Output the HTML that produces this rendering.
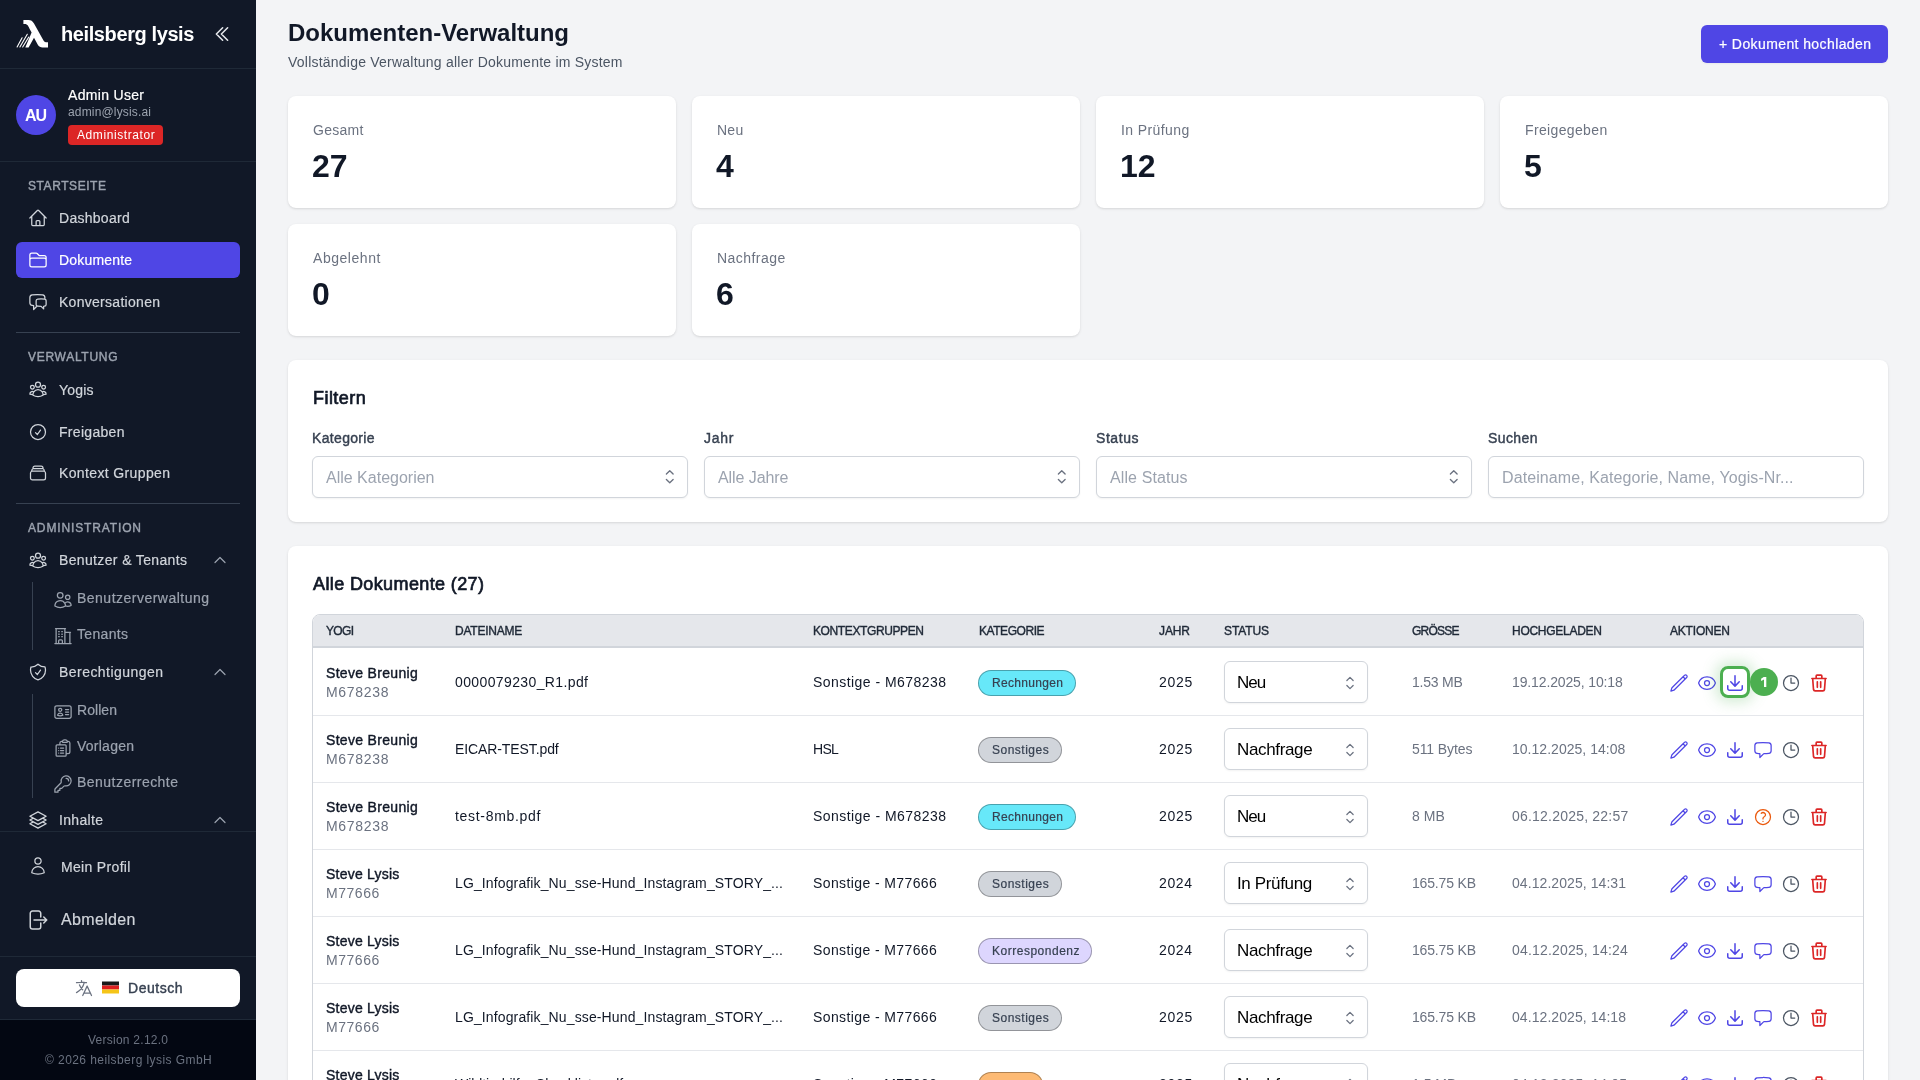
<!DOCTYPE html>
<html lang="de"><head><meta charset="utf-8"><style>*{box-sizing:border-box;margin:0;padding:0}
html,body{width:1920px;height:1080px;overflow:hidden;background:#f3f4f6;font-family:"Liberation Sans",sans-serif;color:#111827}
svg{display:block}
.a{position:absolute}
.t{position:absolute;white-space:pre;line-height:1;will-change:transform}
.ic{position:absolute;fill:none;stroke:currentColor;stroke-linecap:round;stroke-linejoin:round}
.card{position:absolute;background:#fff;border-radius:8px;box-shadow:0 1px 3px 0 rgba(0,0,0,.1),0 1px 2px -1px rgba(0,0,0,.1)}
.sel{position:absolute;background:#fff;border:1px solid #d1d5db;border-radius:6px;box-shadow:0 1px 2px 0 rgba(0,0,0,.05)}
.badge{position:absolute;border-radius:9999px;border:1px solid}
</style></head><body>
<div class="a" style="left:0;top:0;width:256px;height:1080px;background:#111827"></div><div class="a" style="left:0;top:1020px;width:256px;height:60px;background:#030712"></div><svg class="a" style="left:10px;top:10px" width="50" height="50" viewBox="0 0 50 50">
<path fill="#fff" d="M13.4 10 H18.5 C21 10 22.5 11 24 13.5 L33.5 30.5 C34.5 32 35.5 32.3 37 32.3 H38 V37.5 H32.5 C30.5 37.5 29 36.8 27.8 34.8 L24 27.8 L18.6 37.5 H15.3 L21.6 22.6 L19.8 19.2 C18.6 16.6 17.6 14 14.8 14 H13.4 Z"/>
<path stroke="#fff" stroke-width="1.1" fill="none" stroke-linecap="round" d="M7.1 37 L12.1 27.8 M9.9 37 L17.3 24.3 M12.7 37 L18.8 27"/>
</svg><svg class="ic" style="left:212px;top:24px;color:#e5e7eb;" width="20" height="20" viewBox="0 0 24 24" stroke-width="1.9"><path d="m18.75 4.5-7.5 7.5 7.5 7.5m-6-15L5.25 12l7.5 7.5"/></svg><div class="a" style="left:0px;top:68px;width:256px;height:1px;background:#1f2937"></div><div class="a" style="left:16px;top:95px;width:40px;height:40px;border-radius:50%;background:#4f46e5"></div><div class="a" style="left:68px;top:125px;width:95px;height:20px;border-radius:4px;background:#dc2626"></div><div class="a" style="left:0px;top:161px;width:256px;height:1px;background:#1f2937"></div><svg class="ic" style="left:28px;top:208px;color:#d1d5db;" width="20" height="20" viewBox="0 0 24 24" stroke-width="1.5"><path d="m2.25 12 8.954-8.955c.44-.439 1.152-.439 1.591 0L21.75 12M4.5 9.75v10.125c0 .621.504 1.125 1.125 1.125H9.75v-4.875c0-.621.504-1.125 1.125-1.125h2.25c.621 0 1.125.504 1.125 1.125V21h4.125c.621 0 1.125-.504 1.125-1.125V9.75M8.25 21h8.25"/></svg><div class="a" style="left:16px;top:242px;width:224px;height:36px;border-radius:6px;background:#4f46e5"></div><svg class="ic" style="left:28px;top:250px;color:#ffffff;" width="20" height="20" viewBox="0 0 24 24" stroke-width="1.5"><path d="M2.25 12.75V12A2.25 2.25 0 0 1 4.5 9.75h15A2.25 2.25 0 0 1 21.75 12v.75m-8.69-6.44-2.12-2.12a1.5 1.5 0 0 0-1.061-.44H4.5A2.25 2.25 0 0 0 2.25 6v12a2.25 2.25 0 0 0 2.25 2.25h15A2.25 2.25 0 0 0 21.75 18V9a2.25 2.25 0 0 0-2.25-2.25h-5.379a1.5 1.5 0 0 1-1.06-.44Z"/></svg><svg class="ic" style="left:28px;top:292px;color:#d1d5db;" width="20" height="20" viewBox="0 0 24 24" stroke-width="1.5"><path d="M20.25 8.511c.884.284 1.5 1.128 1.5 2.097v4.286c0 1.136-.847 2.1-1.98 2.193-.34.027-.68.052-1.02.072v3.091l-3-3c-1.354 0-2.694-.055-4.02-.163a2.115 2.115 0 0 1-.825-.242m9.345-8.334a2.126 2.126 0 0 0-.476-.095 48.64 48.64 0 0 0-8.048 0c-1.131.094-1.976 1.057-1.976 2.192v4.286c0 .837.46 1.58 1.155 1.951m9.345-8.334V6.637c0-1.621-1.152-3.026-2.76-3.235A48.455 48.455 0 0 0 11.25 3c-2.115 0-4.198.137-6.24.402-1.608.209-2.76 1.614-2.76 3.235v6.226c0 1.621 1.152 3.026 2.76 3.235.577.075 1.157.14 1.74.194V21l4.155-4.155"/></svg><div class="a" style="left:16px;top:332px;width:224px;height:1px;background:#374151"></div><svg class="ic" style="left:28px;top:379px;color:#d1d5db;" width="20" height="20" viewBox="0 0 24 24" stroke-width="1.5"><path d="M18 18.72a9.094 9.094 0 0 0 3.741-.479 3 3 0 0 0-4.682-2.72m.94 3.198.001.031c0 .225-.012.447-.037.666A11.944 11.944 0 0 1 12 21c-2.17 0-4.207-.576-5.963-1.584A6.062 6.062 0 0 1 6 18.719m12 0a5.971 5.971 0 0 0-.941-3.197m0 0A5.995 5.995 0 0 0 12 12.75a5.995 5.995 0 0 0-5.058 2.772m0 0a3 3 0 0 0-4.681 2.72 8.986 8.986 0 0 0 3.74.477m.94-3.197a5.971 5.971 0 0 0-.94 3.197M15 6.75a3 3 0 1 1-6 0 3 3 0 0 1 6 0Zm6 3a2.25 2.25 0 1 1-4.5 0 2.25 2.25 0 0 1 4.5 0Zm-13.5 0a2.25 2.25 0 1 1-4.5 0 2.25 2.25 0 0 1 4.5 0Z"/></svg><svg class="ic" style="left:28px;top:422px;color:#d1d5db;" width="20" height="20" viewBox="0 0 24 24" stroke-width="1.5"><path d="M9 12.75 11.25 15 15 9.75M21 12a9 9 0 1 1-18 0 9 9 0 0 1 18 0Z"/></svg><svg class="ic" style="left:28px;top:463px;color:#d1d5db;" width="20" height="20" viewBox="0 0 24 24" stroke-width="1.5"><path d="M6 6.878V6a2.25 2.25 0 0 1 2.25-2.25h7.5A2.25 2.25 0 0 1 18 6v.878m-12 0c.235-.083.487-.128.75-.128h10.5c.263 0 .515.045.75.128m-12 0A2.25 2.25 0 0 0 4.5 9v.878m13.5-3A2.25 2.25 0 0 1 19.5 9v.878m0 0a2.246 2.246 0 0 0-.75-.128H5.25c-.263 0-.515.045-.75.128m15 0A2.25 2.25 0 0 1 21 12v6a2.25 2.25 0 0 1-2.25 2.25H5.25A2.25 2.25 0 0 1 3 18v-6c0-.98.626-1.813 1.5-2.122"/></svg><div class="a" style="left:16px;top:503px;width:224px;height:1px;background:#374151"></div><svg class="ic" style="left:28px;top:550px;color:#d1d5db;" width="20" height="20" viewBox="0 0 24 24" stroke-width="1.5"><path d="M18 18.72a9.094 9.094 0 0 0 3.741-.479 3 3 0 0 0-4.682-2.72m.94 3.198.001.031c0 .225-.012.447-.037.666A11.944 11.944 0 0 1 12 21c-2.17 0-4.207-.576-5.963-1.584A6.062 6.062 0 0 1 6 18.719m12 0a5.971 5.971 0 0 0-.941-3.197m0 0A5.995 5.995 0 0 0 12 12.75a5.995 5.995 0 0 0-5.058 2.772m0 0a3 3 0 0 0-4.681 2.72 8.986 8.986 0 0 0 3.74.477m.94-3.197a5.971 5.971 0 0 0-.94 3.197M15 6.75a3 3 0 1 1-6 0 3 3 0 0 1 6 0Zm6 3a2.25 2.25 0 1 1-4.5 0 2.25 2.25 0 0 1 4.5 0Zm-13.5 0a2.25 2.25 0 1 1-4.5 0 2.25 2.25 0 0 1 4.5 0Z"/></svg><svg class="ic" style="left:212px;top:552px;color:#9ca3af;" width="16" height="16" viewBox="0 0 24 24" stroke-width="1.8"><path d="m4.5 15.75 7.5-7.5 7.5 7.5"/></svg><div class="a" style="left:32px;top:582px;width:1px;height:68px;background:#374151"></div><svg class="ic" style="left:53px;top:590px;color:#9ca3af;" width="20" height="20" viewBox="0 0 24 24" stroke-width="1.5"><path d="M15 19.128a9.38 9.38 0 0 0 2.625.372 9.337 9.337 0 0 0 4.121-.952 4.125 4.125 0 0 0-7.533-2.493M15 19.128v-.003c0-1.113-.285-2.16-.786-3.07M15 19.128v.106A12.318 12.318 0 0 1 8.624 21c-2.331 0-4.512-.645-6.374-1.766l-.001-.109a6.375 6.375 0 0 1 11.964-3.07M12 6.375a3.375 3.375 0 1 1-6.75 0 3.375 3.375 0 0 1 6.75 0Zm8.25 2.25a2.625 2.625 0 1 1-5.25 0 2.625 2.625 0 0 1 5.25 0Z"/></svg><svg class="ic" style="left:53px;top:626px;color:#9ca3af;" width="20" height="20" viewBox="0 0 24 24" stroke-width="1.5"><path d="M2.25 21h19.5m-18-18v18m10.5-18v18m6-13.5V21M6.75 6.75h.75m-.75 3h.75m-.75 3h.75m3-6h.75m-.75 3h.75m-.75 3h.75M6.75 21v-3.375c0-.621.504-1.125 1.125-1.125h2.25c.621 0 1.125.504 1.125 1.125V21M3 3h12m-.75 4.5H21"/></svg><svg class="ic" style="left:28px;top:662px;color:#d1d5db;" width="20" height="20" viewBox="0 0 24 24" stroke-width="1.5"><path d="M9 12.75 11.25 15 15 9.75m-3-7.036A11.959 11.959 0 0 1 3.598 6 11.99 11.99 0 0 0 3 9.749c0 5.592 3.824 10.29 9 11.623 5.176-1.332 9-6.03 9-11.622 0-1.31-.21-2.571-.598-3.751h-.152c-3.196 0-6.1-1.248-8.25-3.285Z"/></svg><svg class="ic" style="left:212px;top:664px;color:#9ca3af;" width="16" height="16" viewBox="0 0 24 24" stroke-width="1.8"><path d="m4.5 15.75 7.5-7.5 7.5 7.5"/></svg><div class="a" style="left:32px;top:694px;width:1px;height:104px;background:#374151"></div><svg class="ic" style="left:53px;top:702px;color:#9ca3af;" width="20" height="20" viewBox="0 0 24 24" stroke-width="1.5"><path d="M15 9h3.75M15 12h3.75M15 15h3.75M4.5 19.5h15a2.25 2.25 0 0 0 2.25-2.25V6.75A2.25 2.25 0 0 0 19.5 4.5h-15a2.25 2.25 0 0 0-2.25 2.25v10.5A2.25 2.25 0 0 0 4.5 19.5Zm6-10.125a1.875 1.875 0 1 1-3.75 0 1.875 1.875 0 0 1 3.75 0Zm1.294 6.336a6.721 6.721 0 0 1-3.17.789 6.721 6.721 0 0 1-3.168-.789 3.376 3.376 0 0 1 6.338 0Z"/></svg><svg class="ic" style="left:53px;top:738px;color:#9ca3af;" width="20" height="20" viewBox="0 0 24 24" stroke-width="1.5"><path d="M9 12h3.75M9 15h3.75M9 18h3.75m3 .75H18a2.25 2.25 0 0 0 2.25-2.25V6.108c0-1.135-.845-2.098-1.976-2.192a48.424 48.424 0 0 0-1.123-.08m-5.801 0c-.065.21-.1.433-.1.664 0 .414.336.75.75.75h4.5a.75.75 0 0 0 .75-.75 2.25 2.25 0 0 0-.1-.664m-5.8 0A2.251 2.251 0 0 1 13.5 2.25H15c1.012 0 1.867.668 2.15 1.586m-5.8 0c-.376.023-.75.05-1.124.08C9.095 4.01 8.25 4.973 8.25 6.108V8.25m0 0H4.875c-.621 0-1.125.504-1.125 1.125v11.25c0 .621.504 1.125 1.125 1.125h9.75c.621 0 1.125-.504 1.125-1.125V9.375c0-.621-.504-1.125-1.125-1.125H8.25ZM6.75 12h.008v.008H6.75V12Zm0 3h.008v.008H6.75V15Zm0 3h.008v.008H6.75V18Z"/></svg><svg class="ic" style="left:53px;top:774px;color:#9ca3af;" width="20" height="20" viewBox="0 0 24 24" stroke-width="1.5"><path d="M15.75 5.25a3 3 0 0 1 3 3m3 0a6 6 0 0 1-7.029 5.912c-.563-.097-1.159.026-1.563.43L10.5 17.25H8.25v2.25H6v2.25H2.25v-2.818c0-.597.237-1.17.659-1.591l6.499-6.499c.404-.404.527-1 .43-1.563A6 6 0 1 1 21.75 8.25Z"/></svg><svg class="ic" style="left:28px;top:810px;color:#d1d5db;" width="20" height="20" viewBox="0 0 24 24" stroke-width="1.5"><path d="M6.429 9.75 2.25 12l4.179 2.25m0-4.5 5.571 3 5.571-3m-11.142 0L2.25 7.5 12 2.25l9.75 5.25-4.179 2.25m0 0L21.75 12l-4.179 2.25m0 0 4.179 2.25L12 21.75 2.25 16.5l4.179-2.25m11.142 0-5.571 3-5.571-3"/></svg><svg class="ic" style="left:212px;top:812px;color:#9ca3af;" width="16" height="16" viewBox="0 0 24 24" stroke-width="1.8"><path d="m4.5 15.75 7.5-7.5 7.5 7.5"/></svg><div class="a" style="left:0px;top:831px;width:256px;height:1px;background:#1f2937"></div><svg class="ic" style="left:28px;top:856px;color:#d1d5db;" width="20" height="20" viewBox="0 0 24 24" stroke-width="1.5"><path d="M15.75 6a3.75 3.75 0 1 1-7.5 0 3.75 3.75 0 0 1 7.5 0ZM4.501 20.118a7.5 7.5 0 0 1 14.998 0A17.933 17.933 0 0 1 12 21.75c-2.676 0-5.216-.584-7.499-1.632Z"/></svg><svg class="ic" style="left:25px;top:908px;color:#d1d5db;" width="24" height="24" viewBox="0 0 24 24" stroke-width="1.5"><path d="M15.75 9V5.25A2.25 2.25 0 0 0 13.5 3h-6a2.25 2.25 0 0 0-2.25 2.25v13.5A2.25 2.25 0 0 0 7.5 21h6a2.25 2.25 0 0 0 2.25-2.25V15m3 0 3-3m0 0-3-3m3 3H9"/></svg><div class="a" style="left:0px;top:956px;width:256px;height:1px;background:#1f2937"></div><div class="a" style="left:16px;top:969px;width:224px;height:38px;border-radius:8px;background:#fff"></div><svg class="ic" style="left:74px;top:978px;color:#6b7280;" width="20" height="20" viewBox="0 0 24 24" stroke-width="1.5"><path d="m10.5 21 5.25-11.25L21 21m-9-3h7.5M3 5.621a48.474 48.474 0 0 1 6-.371m0 0c1.12 0 2.233.038 3.334.114M9 5.25V3m3.334 2.364C11.176 10.658 7.69 15.08 3 17.502m9.334-12.138c.896.061 1.785.147 2.666.257m-4.589 8.495a18.023 18.023 0 0 1-3.827-5.802"/></svg><svg class="a" style="left:102px;top:981px" width="17" height="13" viewBox="0 0 17 13"><rect x="0" y="0.5" width="17" height="4" fill="#1a1a1a"/><rect x="0" y="4.5" width="17" height="4" fill="#dd1f1f"/><rect x="0" y="8.5" width="17" height="4" fill="#f5c518"/></svg><div class="a" style="left:0px;top:1019px;width:256px;height:1px;background:#1f2937"></div><div class="a" style="left:1701px;top:25px;width:187px;height:38px;border-radius:6px;background:#4f46e5;box-shadow:0 1px 2px rgba(0,0,0,.05)"></div><div class="card" style="left:288px;top:96px;width:388px;height:112px"></div><div class="card" style="left:692px;top:96px;width:388px;height:112px"></div><div class="card" style="left:1096px;top:96px;width:388px;height:112px"></div><div class="card" style="left:1500px;top:96px;width:388px;height:112px"></div><div class="card" style="left:288px;top:224px;width:388px;height:112px"></div><div class="card" style="left:692px;top:224px;width:388px;height:112px"></div><div class="card" style="left:288px;top:360px;width:1600px;height:162px"></div><div class="sel" style="left:312px;top:456px;width:376px;height:42px"></div><svg class="ic" style="left:659.2px;top:466.3px;color:#6b7280;" width="21.5" height="21.5" viewBox="0 0 24 24" stroke-width="1.5"><path d="M8.25 15 12 18.75 15.75 15m-7.5-6L12 5.25 15.75 9"/></svg><div class="sel" style="left:704px;top:456px;width:376px;height:42px"></div><svg class="ic" style="left:1051.2px;top:466.3px;color:#6b7280;" width="21.5" height="21.5" viewBox="0 0 24 24" stroke-width="1.5"><path d="M8.25 15 12 18.75 15.75 15m-7.5-6L12 5.25 15.75 9"/></svg><div class="sel" style="left:1096px;top:456px;width:376px;height:42px"></div><svg class="ic" style="left:1443.2px;top:466.3px;color:#6b7280;" width="21.5" height="21.5" viewBox="0 0 24 24" stroke-width="1.5"><path d="M8.25 15 12 18.75 15.75 15m-7.5-6L12 5.25 15.75 9"/></svg><div class="sel" style="left:1488px;top:456px;width:376px;height:42px"></div><div class="card" style="left:288px;top:546px;width:1600px;height:700px"></div><div class="a" style="left:312px;top:614px;width:1552px;height:600px;border:1px solid #d1d5db;border-radius:8px;overflow:hidden"><div style="height:33px;background:#e5e7eb;border-bottom:2px solid #d1d5db"></div></div><div class="badge" style="left:978px;top:670px;width:98px;height:26px;background:#67e8f9;border-color:rgba(0,0,0,.3)"></div><div class="sel" style="left:1224px;top:661px;width:144px;height:42px"></div><svg class="ic" style="left:1340px;top:673px;color:#6b7280;" width="20" height="20" viewBox="0 0 24 24" stroke-width="1.5"><path d="M8.25 15 12 18.75 15.75 15m-7.5-6L12 5.25 15.75 9"/></svg><svg class="ic" style="left:1669px;top:673px;color:#4f46e5;" width="20" height="20" viewBox="0 0 24 24" stroke-width="1.5"><path d="m16.862 4.487 1.687-1.688a1.875 1.875 0 1 1 2.652 2.652L6.832 19.82a4.5 4.5 0 0 1-1.897 1.13l-2.685.8.8-2.685a4.5 4.5 0 0 1 1.13-1.897L16.863 4.487Zm0 0L19.5 7.125"/></svg><svg class="ic" style="left:1697px;top:673px;color:#4f46e5;" width="20" height="20" viewBox="0 0 24 24" stroke-width="1.5"><path d="M2.036 12.322a1.012 1.012 0 0 1 0-.639C3.423 7.51 7.36 4.5 12 4.5c4.638 0 8.573 3.007 9.963 7.178.07.207.07.431 0 .639C20.577 16.49 16.64 19.5 12 19.5c-4.638 0-8.573-3.007-9.963-7.178Z"/><path d="M15 12a3 3 0 1 1-6 0 3 3 0 0 1 6 0Z"/></svg><div class="a" style="left:1720px;top:666px;width:30px;height:32px;border:3px solid #4caf50;border-radius:8px;box-shadow:0 0 14px 4px rgba(76,175,80,.25)"></div><svg class="a" style="left:1725px;top:673px" width="20" height="20" viewBox="0 0 20 20" fill="#4f46e5"><path d="M10.75 2.75a.75.75 0 0 0-1.5 0v8.614L6.295 8.235a.75.75 0 1 0-1.09 1.03l4.25 4.5a.75.75 0 0 0 1.09 0l4.25-4.5a.75.75 0 0 0-1.09-1.03l-2.955 3.129V2.75Z"/><path d="M3.5 12.75a.75.75 0 0 0-1.5 0v2.5A2.75 2.75 0 0 0 4.75 18h10.5A2.75 2.75 0 0 0 18 15.25v-2.5a.75.75 0 0 0-1.5 0v2.5c0 .69-.56 1.25-1.25 1.25H4.75c-.69 0-1.25-.56-1.25-1.25v-2.5Z"/></svg><div class="a" style="left:1750px;top:668px;width:28px;height:28px;border-radius:50%;background:#4caf50"></div><svg class="a" style="left:1760px;top:676px" width="8" height="12" viewBox="0 0 8 12"><path fill="#fff" d="M3.7 0.9H6.3V11.1H4.0V3.4L1.1 5.0V2.8Z"/></svg><svg class="ic" style="left:1781px;top:673px;color:#4b5563;" width="20" height="20" viewBox="0 0 24 24" stroke-width="1.5"><path d="M12 6v6h4.5m4.5 0a9 9 0 1 1-18 0 9 9 0 0 1 18 0Z"/></svg><svg class="ic" style="left:1809px;top:673px;color:#dc2626;" width="20" height="20" viewBox="0 0 24 24" stroke-width="2"><path d="M3.5 6.6h17M19.6 6.6l-1 13.2A2 2 0 0 1 16.6 21.4H7.4a2 2 0 0 1-2-1.6L4.4 6.6M8.6 6.6V3.5A1 1 0 0 1 9.6 2.5h4.8A1 1 0 0 1 15.4 3.5V6.6M10 10.6v6.6M14 10.6v6.6"/></svg><div class="a" style="left:313px;top:715px;width:1550px;height:1px;background:#e5e7eb"></div><div class="badge" style="left:978px;top:737px;width:84px;height:26px;background:#d1d5db;border-color:rgba(0,0,0,.3)"></div><div class="sel" style="left:1224px;top:728px;width:144px;height:42px"></div><svg class="ic" style="left:1340px;top:740px;color:#6b7280;" width="20" height="20" viewBox="0 0 24 24" stroke-width="1.5"><path d="M8.25 15 12 18.75 15.75 15m-7.5-6L12 5.25 15.75 9"/></svg><svg class="ic" style="left:1669px;top:740px;color:#4f46e5;" width="20" height="20" viewBox="0 0 24 24" stroke-width="1.5"><path d="m16.862 4.487 1.687-1.688a1.875 1.875 0 1 1 2.652 2.652L6.832 19.82a4.5 4.5 0 0 1-1.897 1.13l-2.685.8.8-2.685a4.5 4.5 0 0 1 1.13-1.897L16.863 4.487Zm0 0L19.5 7.125"/></svg><svg class="ic" style="left:1697px;top:740px;color:#4f46e5;" width="20" height="20" viewBox="0 0 24 24" stroke-width="1.5"><path d="M2.036 12.322a1.012 1.012 0 0 1 0-.639C3.423 7.51 7.36 4.5 12 4.5c4.638 0 8.573 3.007 9.963 7.178.07.207.07.431 0 .639C20.577 16.49 16.64 19.5 12 19.5c-4.638 0-8.573-3.007-9.963-7.178Z"/><path d="M15 12a3 3 0 1 1-6 0 3 3 0 0 1 6 0Z"/></svg><svg class="a" style="left:1725px;top:740px" width="20" height="20" viewBox="0 0 20 20" fill="#4f46e5"><path d="M10.75 2.75a.75.75 0 0 0-1.5 0v8.614L6.295 8.235a.75.75 0 1 0-1.09 1.03l4.25 4.5a.75.75 0 0 0 1.09 0l4.25-4.5a.75.75 0 0 0-1.09-1.03l-2.955 3.129V2.75Z"/><path d="M3.5 12.75a.75.75 0 0 0-1.5 0v2.5A2.75 2.75 0 0 0 4.75 18h10.5A2.75 2.75 0 0 0 18 15.25v-2.5a.75.75 0 0 0-1.5 0v2.5c0 .69-.56 1.25-1.25 1.25H4.75c-.69 0-1.25-.56-1.25-1.25v-2.5Z"/></svg><svg class="ic" style="left:1753px;top:740px;color:#4f46e5;" width="20" height="20" viewBox="0 0 24 24" stroke-width="1.5"><path d="M2.25 12.76c0 1.6 1.123 2.994 2.707 3.227 1.087.16 2.185.283 3.293.369V21l4.076-4.076a1.526 1.526 0 0 1 1.037-.443 48.282 48.282 0 0 0 5.68-.494c1.584-.233 2.707-1.626 2.707-3.228V6.741c0-1.602-1.123-2.995-2.707-3.228A48.394 48.394 0 0 0 12 3c-2.392 0-4.744.175-7.043.513C3.373 3.746 2.25 5.14 2.25 6.741v6.018Z"/></svg><svg class="ic" style="left:1781px;top:740px;color:#4b5563;" width="20" height="20" viewBox="0 0 24 24" stroke-width="1.5"><path d="M12 6v6h4.5m4.5 0a9 9 0 1 1-18 0 9 9 0 0 1 18 0Z"/></svg><svg class="ic" style="left:1809px;top:740px;color:#dc2626;" width="20" height="20" viewBox="0 0 24 24" stroke-width="2"><path d="M3.5 6.6h17M19.6 6.6l-1 13.2A2 2 0 0 1 16.6 21.4H7.4a2 2 0 0 1-2-1.6L4.4 6.6M8.6 6.6V3.5A1 1 0 0 1 9.6 2.5h4.8A1 1 0 0 1 15.4 3.5V6.6M10 10.6v6.6M14 10.6v6.6"/></svg><div class="a" style="left:313px;top:782px;width:1550px;height:1px;background:#e5e7eb"></div><div class="badge" style="left:978px;top:804px;width:98px;height:26px;background:#67e8f9;border-color:rgba(0,0,0,.3)"></div><div class="sel" style="left:1224px;top:795px;width:144px;height:42px"></div><svg class="ic" style="left:1340px;top:807px;color:#6b7280;" width="20" height="20" viewBox="0 0 24 24" stroke-width="1.5"><path d="M8.25 15 12 18.75 15.75 15m-7.5-6L12 5.25 15.75 9"/></svg><svg class="ic" style="left:1669px;top:807px;color:#4f46e5;" width="20" height="20" viewBox="0 0 24 24" stroke-width="1.5"><path d="m16.862 4.487 1.687-1.688a1.875 1.875 0 1 1 2.652 2.652L6.832 19.82a4.5 4.5 0 0 1-1.897 1.13l-2.685.8.8-2.685a4.5 4.5 0 0 1 1.13-1.897L16.863 4.487Zm0 0L19.5 7.125"/></svg><svg class="ic" style="left:1697px;top:807px;color:#4f46e5;" width="20" height="20" viewBox="0 0 24 24" stroke-width="1.5"><path d="M2.036 12.322a1.012 1.012 0 0 1 0-.639C3.423 7.51 7.36 4.5 12 4.5c4.638 0 8.573 3.007 9.963 7.178.07.207.07.431 0 .639C20.577 16.49 16.64 19.5 12 19.5c-4.638 0-8.573-3.007-9.963-7.178Z"/><path d="M15 12a3 3 0 1 1-6 0 3 3 0 0 1 6 0Z"/></svg><svg class="a" style="left:1725px;top:807px" width="20" height="20" viewBox="0 0 20 20" fill="#4f46e5"><path d="M10.75 2.75a.75.75 0 0 0-1.5 0v8.614L6.295 8.235a.75.75 0 1 0-1.09 1.03l4.25 4.5a.75.75 0 0 0 1.09 0l4.25-4.5a.75.75 0 0 0-1.09-1.03l-2.955 3.129V2.75Z"/><path d="M3.5 12.75a.75.75 0 0 0-1.5 0v2.5A2.75 2.75 0 0 0 4.75 18h10.5A2.75 2.75 0 0 0 18 15.25v-2.5a.75.75 0 0 0-1.5 0v2.5c0 .69-.56 1.25-1.25 1.25H4.75c-.69 0-1.25-.56-1.25-1.25v-2.5Z"/></svg><svg class="ic" style="left:1753px;top:807px;color:#ea580c;" width="20" height="20" viewBox="0 0 24 24" stroke-width="1.5"><path d="M9.879 7.519c1.171-1.025 3.071-1.025 4.242 0 1.172 1.025 1.172 2.687 0 3.712-.203.179-.43.326-.67.442-.745.361-1.45.999-1.45 1.827v.75M21 12a9 9 0 1 1-18 0 9 9 0 0 1 18 0Zm-9 5.25h.008v.008H12v-.008Z"/></svg><svg class="ic" style="left:1781px;top:807px;color:#4b5563;" width="20" height="20" viewBox="0 0 24 24" stroke-width="1.5"><path d="M12 6v6h4.5m4.5 0a9 9 0 1 1-18 0 9 9 0 0 1 18 0Z"/></svg><svg class="ic" style="left:1809px;top:807px;color:#dc2626;" width="20" height="20" viewBox="0 0 24 24" stroke-width="2"><path d="M3.5 6.6h17M19.6 6.6l-1 13.2A2 2 0 0 1 16.6 21.4H7.4a2 2 0 0 1-2-1.6L4.4 6.6M8.6 6.6V3.5A1 1 0 0 1 9.6 2.5h4.8A1 1 0 0 1 15.4 3.5V6.6M10 10.6v6.6M14 10.6v6.6"/></svg><div class="a" style="left:313px;top:849px;width:1550px;height:1px;background:#e5e7eb"></div><div class="badge" style="left:978px;top:871px;width:84px;height:26px;background:#d1d5db;border-color:rgba(0,0,0,.3)"></div><div class="sel" style="left:1224px;top:862px;width:144px;height:42px"></div><svg class="ic" style="left:1340px;top:874px;color:#6b7280;" width="20" height="20" viewBox="0 0 24 24" stroke-width="1.5"><path d="M8.25 15 12 18.75 15.75 15m-7.5-6L12 5.25 15.75 9"/></svg><svg class="ic" style="left:1669px;top:874px;color:#4f46e5;" width="20" height="20" viewBox="0 0 24 24" stroke-width="1.5"><path d="m16.862 4.487 1.687-1.688a1.875 1.875 0 1 1 2.652 2.652L6.832 19.82a4.5 4.5 0 0 1-1.897 1.13l-2.685.8.8-2.685a4.5 4.5 0 0 1 1.13-1.897L16.863 4.487Zm0 0L19.5 7.125"/></svg><svg class="ic" style="left:1697px;top:874px;color:#4f46e5;" width="20" height="20" viewBox="0 0 24 24" stroke-width="1.5"><path d="M2.036 12.322a1.012 1.012 0 0 1 0-.639C3.423 7.51 7.36 4.5 12 4.5c4.638 0 8.573 3.007 9.963 7.178.07.207.07.431 0 .639C20.577 16.49 16.64 19.5 12 19.5c-4.638 0-8.573-3.007-9.963-7.178Z"/><path d="M15 12a3 3 0 1 1-6 0 3 3 0 0 1 6 0Z"/></svg><svg class="a" style="left:1725px;top:874px" width="20" height="20" viewBox="0 0 20 20" fill="#4f46e5"><path d="M10.75 2.75a.75.75 0 0 0-1.5 0v8.614L6.295 8.235a.75.75 0 1 0-1.09 1.03l4.25 4.5a.75.75 0 0 0 1.09 0l4.25-4.5a.75.75 0 0 0-1.09-1.03l-2.955 3.129V2.75Z"/><path d="M3.5 12.75a.75.75 0 0 0-1.5 0v2.5A2.75 2.75 0 0 0 4.75 18h10.5A2.75 2.75 0 0 0 18 15.25v-2.5a.75.75 0 0 0-1.5 0v2.5c0 .69-.56 1.25-1.25 1.25H4.75c-.69 0-1.25-.56-1.25-1.25v-2.5Z"/></svg><svg class="ic" style="left:1753px;top:874px;color:#4f46e5;" width="20" height="20" viewBox="0 0 24 24" stroke-width="1.5"><path d="M2.25 12.76c0 1.6 1.123 2.994 2.707 3.227 1.087.16 2.185.283 3.293.369V21l4.076-4.076a1.526 1.526 0 0 1 1.037-.443 48.282 48.282 0 0 0 5.68-.494c1.584-.233 2.707-1.626 2.707-3.228V6.741c0-1.602-1.123-2.995-2.707-3.228A48.394 48.394 0 0 0 12 3c-2.392 0-4.744.175-7.043.513C3.373 3.746 2.25 5.14 2.25 6.741v6.018Z"/></svg><svg class="ic" style="left:1781px;top:874px;color:#4b5563;" width="20" height="20" viewBox="0 0 24 24" stroke-width="1.5"><path d="M12 6v6h4.5m4.5 0a9 9 0 1 1-18 0 9 9 0 0 1 18 0Z"/></svg><svg class="ic" style="left:1809px;top:874px;color:#dc2626;" width="20" height="20" viewBox="0 0 24 24" stroke-width="2"><path d="M3.5 6.6h17M19.6 6.6l-1 13.2A2 2 0 0 1 16.6 21.4H7.4a2 2 0 0 1-2-1.6L4.4 6.6M8.6 6.6V3.5A1 1 0 0 1 9.6 2.5h4.8A1 1 0 0 1 15.4 3.5V6.6M10 10.6v6.6M14 10.6v6.6"/></svg><div class="a" style="left:313px;top:916px;width:1550px;height:1px;background:#e5e7eb"></div><div class="badge" style="left:978px;top:938px;width:114px;height:26px;background:#ddd6fe;border-color:rgba(0,0,0,.3)"></div><div class="sel" style="left:1224px;top:929px;width:144px;height:42px"></div><svg class="ic" style="left:1340px;top:941px;color:#6b7280;" width="20" height="20" viewBox="0 0 24 24" stroke-width="1.5"><path d="M8.25 15 12 18.75 15.75 15m-7.5-6L12 5.25 15.75 9"/></svg><svg class="ic" style="left:1669px;top:941px;color:#4f46e5;" width="20" height="20" viewBox="0 0 24 24" stroke-width="1.5"><path d="m16.862 4.487 1.687-1.688a1.875 1.875 0 1 1 2.652 2.652L6.832 19.82a4.5 4.5 0 0 1-1.897 1.13l-2.685.8.8-2.685a4.5 4.5 0 0 1 1.13-1.897L16.863 4.487Zm0 0L19.5 7.125"/></svg><svg class="ic" style="left:1697px;top:941px;color:#4f46e5;" width="20" height="20" viewBox="0 0 24 24" stroke-width="1.5"><path d="M2.036 12.322a1.012 1.012 0 0 1 0-.639C3.423 7.51 7.36 4.5 12 4.5c4.638 0 8.573 3.007 9.963 7.178.07.207.07.431 0 .639C20.577 16.49 16.64 19.5 12 19.5c-4.638 0-8.573-3.007-9.963-7.178Z"/><path d="M15 12a3 3 0 1 1-6 0 3 3 0 0 1 6 0Z"/></svg><svg class="a" style="left:1725px;top:941px" width="20" height="20" viewBox="0 0 20 20" fill="#4f46e5"><path d="M10.75 2.75a.75.75 0 0 0-1.5 0v8.614L6.295 8.235a.75.75 0 1 0-1.09 1.03l4.25 4.5a.75.75 0 0 0 1.09 0l4.25-4.5a.75.75 0 0 0-1.09-1.03l-2.955 3.129V2.75Z"/><path d="M3.5 12.75a.75.75 0 0 0-1.5 0v2.5A2.75 2.75 0 0 0 4.75 18h10.5A2.75 2.75 0 0 0 18 15.25v-2.5a.75.75 0 0 0-1.5 0v2.5c0 .69-.56 1.25-1.25 1.25H4.75c-.69 0-1.25-.56-1.25-1.25v-2.5Z"/></svg><svg class="ic" style="left:1753px;top:941px;color:#4f46e5;" width="20" height="20" viewBox="0 0 24 24" stroke-width="1.5"><path d="M2.25 12.76c0 1.6 1.123 2.994 2.707 3.227 1.087.16 2.185.283 3.293.369V21l4.076-4.076a1.526 1.526 0 0 1 1.037-.443 48.282 48.282 0 0 0 5.68-.494c1.584-.233 2.707-1.626 2.707-3.228V6.741c0-1.602-1.123-2.995-2.707-3.228A48.394 48.394 0 0 0 12 3c-2.392 0-4.744.175-7.043.513C3.373 3.746 2.25 5.14 2.25 6.741v6.018Z"/></svg><svg class="ic" style="left:1781px;top:941px;color:#4b5563;" width="20" height="20" viewBox="0 0 24 24" stroke-width="1.5"><path d="M12 6v6h4.5m4.5 0a9 9 0 1 1-18 0 9 9 0 0 1 18 0Z"/></svg><svg class="ic" style="left:1809px;top:941px;color:#dc2626;" width="20" height="20" viewBox="0 0 24 24" stroke-width="2"><path d="M3.5 6.6h17M19.6 6.6l-1 13.2A2 2 0 0 1 16.6 21.4H7.4a2 2 0 0 1-2-1.6L4.4 6.6M8.6 6.6V3.5A1 1 0 0 1 9.6 2.5h4.8A1 1 0 0 1 15.4 3.5V6.6M10 10.6v6.6M14 10.6v6.6"/></svg><div class="a" style="left:313px;top:983px;width:1550px;height:1px;background:#e5e7eb"></div><div class="badge" style="left:978px;top:1005px;width:84px;height:26px;background:#d1d5db;border-color:rgba(0,0,0,.3)"></div><div class="sel" style="left:1224px;top:996px;width:144px;height:42px"></div><svg class="ic" style="left:1340px;top:1008px;color:#6b7280;" width="20" height="20" viewBox="0 0 24 24" stroke-width="1.5"><path d="M8.25 15 12 18.75 15.75 15m-7.5-6L12 5.25 15.75 9"/></svg><svg class="ic" style="left:1669px;top:1008px;color:#4f46e5;" width="20" height="20" viewBox="0 0 24 24" stroke-width="1.5"><path d="m16.862 4.487 1.687-1.688a1.875 1.875 0 1 1 2.652 2.652L6.832 19.82a4.5 4.5 0 0 1-1.897 1.13l-2.685.8.8-2.685a4.5 4.5 0 0 1 1.13-1.897L16.863 4.487Zm0 0L19.5 7.125"/></svg><svg class="ic" style="left:1697px;top:1008px;color:#4f46e5;" width="20" height="20" viewBox="0 0 24 24" stroke-width="1.5"><path d="M2.036 12.322a1.012 1.012 0 0 1 0-.639C3.423 7.51 7.36 4.5 12 4.5c4.638 0 8.573 3.007 9.963 7.178.07.207.07.431 0 .639C20.577 16.49 16.64 19.5 12 19.5c-4.638 0-8.573-3.007-9.963-7.178Z"/><path d="M15 12a3 3 0 1 1-6 0 3 3 0 0 1 6 0Z"/></svg><svg class="a" style="left:1725px;top:1008px" width="20" height="20" viewBox="0 0 20 20" fill="#4f46e5"><path d="M10.75 2.75a.75.75 0 0 0-1.5 0v8.614L6.295 8.235a.75.75 0 1 0-1.09 1.03l4.25 4.5a.75.75 0 0 0 1.09 0l4.25-4.5a.75.75 0 0 0-1.09-1.03l-2.955 3.129V2.75Z"/><path d="M3.5 12.75a.75.75 0 0 0-1.5 0v2.5A2.75 2.75 0 0 0 4.75 18h10.5A2.75 2.75 0 0 0 18 15.25v-2.5a.75.75 0 0 0-1.5 0v2.5c0 .69-.56 1.25-1.25 1.25H4.75c-.69 0-1.25-.56-1.25-1.25v-2.5Z"/></svg><svg class="ic" style="left:1753px;top:1008px;color:#4f46e5;" width="20" height="20" viewBox="0 0 24 24" stroke-width="1.5"><path d="M2.25 12.76c0 1.6 1.123 2.994 2.707 3.227 1.087.16 2.185.283 3.293.369V21l4.076-4.076a1.526 1.526 0 0 1 1.037-.443 48.282 48.282 0 0 0 5.68-.494c1.584-.233 2.707-1.626 2.707-3.228V6.741c0-1.602-1.123-2.995-2.707-3.228A48.394 48.394 0 0 0 12 3c-2.392 0-4.744.175-7.043.513C3.373 3.746 2.25 5.14 2.25 6.741v6.018Z"/></svg><svg class="ic" style="left:1781px;top:1008px;color:#4b5563;" width="20" height="20" viewBox="0 0 24 24" stroke-width="1.5"><path d="M12 6v6h4.5m4.5 0a9 9 0 1 1-18 0 9 9 0 0 1 18 0Z"/></svg><svg class="ic" style="left:1809px;top:1008px;color:#dc2626;" width="20" height="20" viewBox="0 0 24 24" stroke-width="2"><path d="M3.5 6.6h17M19.6 6.6l-1 13.2A2 2 0 0 1 16.6 21.4H7.4a2 2 0 0 1-2-1.6L4.4 6.6M8.6 6.6V3.5A1 1 0 0 1 9.6 2.5h4.8A1 1 0 0 1 15.4 3.5V6.6M10 10.6v6.6M14 10.6v6.6"/></svg><div class="a" style="left:313px;top:1050px;width:1550px;height:1px;background:#e5e7eb"></div><div class="badge" style="left:978px;top:1072px;width:65px;height:26px;background:#fdba74;border-color:rgba(0,0,0,.3)"></div><div class="sel" style="left:1224px;top:1063px;width:144px;height:42px"></div><svg class="ic" style="left:1340px;top:1075px;color:#6b7280;" width="20" height="20" viewBox="0 0 24 24" stroke-width="1.5"><path d="M8.25 15 12 18.75 15.75 15m-7.5-6L12 5.25 15.75 9"/></svg><svg class="ic" style="left:1669px;top:1075px;color:#4f46e5;" width="20" height="20" viewBox="0 0 24 24" stroke-width="1.5"><path d="m16.862 4.487 1.687-1.688a1.875 1.875 0 1 1 2.652 2.652L6.832 19.82a4.5 4.5 0 0 1-1.897 1.13l-2.685.8.8-2.685a4.5 4.5 0 0 1 1.13-1.897L16.863 4.487Zm0 0L19.5 7.125"/></svg><svg class="ic" style="left:1697px;top:1075px;color:#4f46e5;" width="20" height="20" viewBox="0 0 24 24" stroke-width="1.5"><path d="M2.036 12.322a1.012 1.012 0 0 1 0-.639C3.423 7.51 7.36 4.5 12 4.5c4.638 0 8.573 3.007 9.963 7.178.07.207.07.431 0 .639C20.577 16.49 16.64 19.5 12 19.5c-4.638 0-8.573-3.007-9.963-7.178Z"/><path d="M15 12a3 3 0 1 1-6 0 3 3 0 0 1 6 0Z"/></svg><svg class="a" style="left:1725px;top:1075px" width="20" height="20" viewBox="0 0 20 20" fill="#4f46e5"><path d="M10.75 2.75a.75.75 0 0 0-1.5 0v8.614L6.295 8.235a.75.75 0 1 0-1.09 1.03l4.25 4.5a.75.75 0 0 0 1.09 0l4.25-4.5a.75.75 0 0 0-1.09-1.03l-2.955 3.129V2.75Z"/><path d="M3.5 12.75a.75.75 0 0 0-1.5 0v2.5A2.75 2.75 0 0 0 4.75 18h10.5A2.75 2.75 0 0 0 18 15.25v-2.5a.75.75 0 0 0-1.5 0v2.5c0 .69-.56 1.25-1.25 1.25H4.75c-.69 0-1.25-.56-1.25-1.25v-2.5Z"/></svg><svg class="ic" style="left:1753px;top:1075px;color:#4f46e5;" width="20" height="20" viewBox="0 0 24 24" stroke-width="1.5"><path d="M2.25 12.76c0 1.6 1.123 2.994 2.707 3.227 1.087.16 2.185.283 3.293.369V21l4.076-4.076a1.526 1.526 0 0 1 1.037-.443 48.282 48.282 0 0 0 5.68-.494c1.584-.233 2.707-1.626 2.707-3.228V6.741c0-1.602-1.123-2.995-2.707-3.228A48.394 48.394 0 0 0 12 3c-2.392 0-4.744.175-7.043.513C3.373 3.746 2.25 5.14 2.25 6.741v6.018Z"/></svg><svg class="ic" style="left:1781px;top:1075px;color:#4b5563;" width="20" height="20" viewBox="0 0 24 24" stroke-width="1.5"><path d="M12 6v6h4.5m4.5 0a9 9 0 1 1-18 0 9 9 0 0 1 18 0Z"/></svg><svg class="ic" style="left:1809px;top:1075px;color:#dc2626;" width="20" height="20" viewBox="0 0 24 24" stroke-width="2"><path d="M3.5 6.6h17M19.6 6.6l-1 13.2A2 2 0 0 1 16.6 21.4H7.4a2 2 0 0 1-2-1.6L4.4 6.6M8.6 6.6V3.5A1 1 0 0 1 9.6 2.5h4.8A1 1 0 0 1 15.4 3.5V6.6M10 10.6v6.6M14 10.6v6.6"/></svg>
<div class="t" style="left:61.0px;top:23.57px;font-size:20px;font-weight:700;color:#ffffff;letter-spacing:-0.398px;">heilsberg lysis</div><div class="t" style="left:25.0px;top:108.06px;font-size:16px;font-weight:700;color:#fff;letter-spacing:-1.109px;">AU</div><div class="t" style="left:68.0px;top:88.25px;font-size:14px;font-weight:400;color:#ffffff;letter-spacing:0.318px;-webkit-text-stroke:0.2px #ffffff;">Admin User</div><div class="t" style="left:68.0px;top:106.34px;font-size:12px;font-weight:400;color:#9ca3af;letter-spacing:0.163px;">admin@lysis.ai</div><div class="t" style="left:76.5px;top:129.04px;font-size:12px;font-weight:400;color:#ffffff;letter-spacing:0.593px;">Administrator</div><div class="t" style="left:28.0px;top:179.84px;font-size:12px;font-weight:400;color:#9ca3af;letter-spacing:0.566px;-webkit-text-stroke:0.4px #9ca3af;">STARTSEITE</div><div class="t" style="left:58.5px;top:211.05px;font-size:14px;font-weight:400;color:#d1d5db;letter-spacing:0.275px;-webkit-text-stroke:0.2px #d1d5db;">Dashboard</div><div class="t" style="left:58.5px;top:252.95px;font-size:14px;font-weight:400;color:#ffffff;letter-spacing:0.176px;-webkit-text-stroke:0.2px #ffffff;">Dokumente</div><div class="t" style="left:58.5px;top:295.15px;font-size:14px;font-weight:400;color:#d1d5db;letter-spacing:0.285px;-webkit-text-stroke:0.2px #d1d5db;">Konversationen</div><div class="t" style="left:28.0px;top:351.24px;font-size:12px;font-weight:400;color:#9ca3af;letter-spacing:0.708px;-webkit-text-stroke:0.4px #9ca3af;">VERWALTUNG</div><div class="t" style="left:58.5px;top:382.55px;font-size:14px;font-weight:400;color:#d1d5db;letter-spacing:0.188px;-webkit-text-stroke:0.2px #d1d5db;">Yogis</div><div class="t" style="left:58.5px;top:424.65px;font-size:14px;font-weight:400;color:#d1d5db;letter-spacing:0.307px;-webkit-text-stroke:0.2px #d1d5db;">Freigaben</div><div class="t" style="left:58.5px;top:466.45px;font-size:14px;font-weight:400;color:#d1d5db;letter-spacing:0.367px;-webkit-text-stroke:0.2px #d1d5db;">Kontext Gruppen</div><div class="t" style="left:28.0px;top:521.84px;font-size:12px;font-weight:400;color:#9ca3af;letter-spacing:0.863px;-webkit-text-stroke:0.4px #9ca3af;">ADMINISTRATION</div><div class="t" style="left:58.5px;top:553.05px;font-size:14px;font-weight:400;color:#d1d5db;letter-spacing:0.357px;-webkit-text-stroke:0.2px #d1d5db;">Benutzer &amp; Tenants</div><div class="t" style="left:77.4px;top:591.15px;font-size:14px;font-weight:400;color:#9ca3af;letter-spacing:0.485px;-webkit-text-stroke:0.2px #9ca3af;">Benutzerverwaltung</div><div class="t" style="left:77.4px;top:626.65px;font-size:14px;font-weight:400;color:#9ca3af;letter-spacing:0.326px;-webkit-text-stroke:0.2px #9ca3af;">Tenants</div><div class="t" style="left:58.5px;top:665.15px;font-size:14px;font-weight:400;color:#d1d5db;letter-spacing:0.456px;-webkit-text-stroke:0.2px #d1d5db;">Berechtigungen</div><div class="t" style="left:77.4px;top:703.35px;font-size:14px;font-weight:400;color:#9ca3af;letter-spacing:0.059px;-webkit-text-stroke:0.2px #9ca3af;">Rollen</div><div class="t" style="left:77.4px;top:738.85px;font-size:14px;font-weight:400;color:#9ca3af;letter-spacing:0.246px;-webkit-text-stroke:0.2px #9ca3af;">Vorlagen</div><div class="t" style="left:77.4px;top:775.15px;font-size:14px;font-weight:400;color:#9ca3af;letter-spacing:0.465px;-webkit-text-stroke:0.2px #9ca3af;">Benutzerrechte</div><div class="t" style="left:58.5px;top:812.95px;font-size:14px;font-weight:400;color:#d1d5db;letter-spacing:0.326px;-webkit-text-stroke:0.2px #d1d5db;">Inhalte</div><div class="t" style="left:60.5px;top:859.85px;font-size:14px;font-weight:400;color:#d1d5db;letter-spacing:0.326px;-webkit-text-stroke:0.2px #d1d5db;">Mein Profil</div><div class="t" style="left:60.5px;top:912.46px;font-size:16px;font-weight:400;color:#d1d5db;letter-spacing:0.350px;-webkit-text-stroke:0.2px #d1d5db;">Abmelden</div><div class="t" style="left:128.0px;top:981.35px;font-size:14px;font-weight:400;color:#374151;letter-spacing:0.523px;-webkit-text-stroke:0.4px #374151;">Deutsch</div><div class="t" style="left:88.0px;top:1033.84px;font-size:12px;font-weight:400;color:#6b7280;letter-spacing:0.251px;">Version 2.12.0</div><div class="t" style="left:44.7px;top:1053.64px;font-size:12px;font-weight:400;color:#6b7280;letter-spacing:0.428px;">© 2026 heilsberg lysis GmbH</div><div class="t" style="left:288.0px;top:21.38px;font-size:24px;font-weight:700;color:#111827;letter-spacing:-0.019px;">Dokumenten-Verwaltung</div><div class="t" style="left:288.0px;top:55.05px;font-size:14px;font-weight:400;color:#4b5563;letter-spacing:0.225px;">Vollständige Verwaltung aller Dokumente im System</div><div class="t" style="left:1718.7px;top:37.25px;font-size:14px;font-weight:400;color:#ffffff;letter-spacing:0.401px;-webkit-text-stroke:0.2px #ffffff;">+ Dokument hochladen</div><div class="t" style="left:312.5px;top:123.25px;font-size:14px;font-weight:400;color:#6b7280;letter-spacing:0.257px;">Gesamt</div><div class="t" style="left:312.0px;top:150.11px;font-size:32px;font-weight:700;color:#111827;letter-spacing:0.000px;">27</div><div class="t" style="left:716.5px;top:123.25px;font-size:14px;font-weight:400;color:#6b7280;letter-spacing:0.256px;">Neu</div><div class="t" style="left:716.0px;top:150.11px;font-size:32px;font-weight:700;color:#111827;letter-spacing:0.000px;">4</div><div class="t" style="left:1120.5px;top:123.25px;font-size:14px;font-weight:400;color:#6b7280;letter-spacing:0.399px;">In Prüfung</div><div class="t" style="left:1120.0px;top:150.11px;font-size:32px;font-weight:700;color:#111827;letter-spacing:0.000px;">12</div><div class="t" style="left:1524.5px;top:123.25px;font-size:14px;font-weight:400;color:#6b7280;letter-spacing:0.358px;">Freigegeben</div><div class="t" style="left:1524.0px;top:150.11px;font-size:32px;font-weight:700;color:#111827;letter-spacing:0.000px;">5</div><div class="t" style="left:312.5px;top:251.25px;font-size:14px;font-weight:400;color:#6b7280;letter-spacing:0.542px;">Abgelehnt</div><div class="t" style="left:312.0px;top:278.11px;font-size:32px;font-weight:700;color:#111827;letter-spacing:0.000px;">0</div><div class="t" style="left:716.5px;top:251.25px;font-size:14px;font-weight:400;color:#6b7280;letter-spacing:0.451px;">Nachfrage</div><div class="t" style="left:716.0px;top:278.11px;font-size:32px;font-weight:700;color:#111827;letter-spacing:0.000px;">6</div><div class="t" style="left:312.5px;top:389.26px;font-size:18px;font-weight:400;color:#111827;letter-spacing:0.447px;-webkit-text-stroke:0.7px #111827;">Filtern</div><div class="t" style="left:312.0px;top:430.95px;font-size:14px;font-weight:400;color:#374151;letter-spacing:0.333px;-webkit-text-stroke:0.4px #374151;">Kategorie</div><div class="t" style="left:325.5px;top:470.06px;font-size:16px;font-weight:400;color:#9ca3af;letter-spacing:-0.001px;">Alle Kategorien</div><div class="t" style="left:704.0px;top:430.95px;font-size:14px;font-weight:400;color:#374151;letter-spacing:0.755px;-webkit-text-stroke:0.4px #374151;">Jahr</div><div class="t" style="left:717.5px;top:470.06px;font-size:16px;font-weight:400;color:#9ca3af;letter-spacing:-0.073px;">Alle Jahre</div><div class="t" style="left:1096.0px;top:430.95px;font-size:14px;font-weight:400;color:#374151;letter-spacing:0.559px;-webkit-text-stroke:0.4px #374151;">Status</div><div class="t" style="left:1109.5px;top:470.06px;font-size:16px;font-weight:400;color:#9ca3af;letter-spacing:0.102px;">Alle Status</div><div class="t" style="left:1488.0px;top:430.95px;font-size:14px;font-weight:400;color:#374151;letter-spacing:0.403px;-webkit-text-stroke:0.4px #374151;">Suchen</div><div class="t" style="left:1501.5px;top:470.06px;font-size:16px;font-weight:400;color:#9ca3af;letter-spacing:0.088px;">Dateiname, Kategorie, Name, Yogis-Nr...</div><div class="t" style="left:312.7px;top:575.26px;font-size:18px;font-weight:400;color:#111827;letter-spacing:0.385px;-webkit-text-stroke:0.7px #111827;">Alle Dokumente (27)</div><div class="t" style="left:325.5px;top:624.84px;font-size:12px;font-weight:400;color:#1f2937;letter-spacing:-0.672px;-webkit-text-stroke:0.4px #1f2937;">YOGI</div><div class="t" style="left:455.0px;top:624.84px;font-size:12px;font-weight:400;color:#1f2937;letter-spacing:-0.228px;-webkit-text-stroke:0.4px #1f2937;">DATEINAME</div><div class="t" style="left:813.0px;top:624.84px;font-size:12px;font-weight:400;color:#1f2937;letter-spacing:-0.386px;-webkit-text-stroke:0.4px #1f2937;">KONTEXTGRUPPEN</div><div class="t" style="left:978.5px;top:624.84px;font-size:12px;font-weight:400;color:#1f2937;letter-spacing:-0.441px;-webkit-text-stroke:0.4px #1f2937;">KATEGORIE</div><div class="t" style="left:1159.3px;top:624.84px;font-size:12px;font-weight:400;color:#1f2937;letter-spacing:-0.115px;-webkit-text-stroke:0.4px #1f2937;">JAHR</div><div class="t" style="left:1224.0px;top:624.84px;font-size:12px;font-weight:400;color:#1f2937;letter-spacing:-0.113px;-webkit-text-stroke:0.4px #1f2937;">STATUS</div><div class="t" style="left:1412.0px;top:624.84px;font-size:12px;font-weight:400;color:#1f2937;letter-spacing:-0.792px;-webkit-text-stroke:0.4px #1f2937;">GRÖSSE</div><div class="t" style="left:1511.5px;top:624.84px;font-size:12px;font-weight:400;color:#1f2937;letter-spacing:-0.269px;-webkit-text-stroke:0.4px #1f2937;">HOCHGELADEN</div><div class="t" style="left:1669.5px;top:624.84px;font-size:12px;font-weight:400;color:#1f2937;letter-spacing:-0.192px;-webkit-text-stroke:0.4px #1f2937;">AKTIONEN</div><div class="t" style="left:325.5px;top:665.55px;font-size:14px;font-weight:400;color:#111827;letter-spacing:0.312px;-webkit-text-stroke:0.4px #111827;">Steve Breunig</div><div class="t" style="left:325.5px;top:685.15px;font-size:14px;font-weight:400;color:#6b7280;letter-spacing:0.685px;">M678238</div><div class="t" style="left:455.0px;top:675.45px;font-size:14px;font-weight:400;color:#111827;letter-spacing:0.381px;">0000079230_R1.pdf</div><div class="t" style="left:813.0px;top:675.45px;font-size:14px;font-weight:400;color:#111827;letter-spacing:0.452px;">Sonstige - M678238</div><div class="t" style="left:992.0px;top:676.84px;font-size:12px;font-weight:400;color:#374151;letter-spacing:0.326px;-webkit-text-stroke:0.2px #374151;">Rechnungen</div><div class="t" style="left:1159.3px;top:675.45px;font-size:14px;font-weight:400;color:#111827;letter-spacing:0.715px;">2025</div><div class="t" style="left:1237.3px;top:673.81px;font-size:17px;font-weight:400;color:#000000;letter-spacing:-0.994px;">Neu</div><div class="t" style="left:1412.0px;top:675.45px;font-size:14px;font-weight:400;color:#6b7280;letter-spacing:-0.223px;">1.53 MB</div><div class="t" style="left:1511.5px;top:675.45px;font-size:14px;font-weight:400;color:#6b7280;letter-spacing:-0.131px;">19.12.2025, 10:18</div><div class="t" style="left:325.5px;top:732.55px;font-size:14px;font-weight:400;color:#111827;letter-spacing:0.312px;-webkit-text-stroke:0.4px #111827;">Steve Breunig</div><div class="t" style="left:325.5px;top:752.15px;font-size:14px;font-weight:400;color:#6b7280;letter-spacing:0.685px;">M678238</div><div class="t" style="left:455.0px;top:742.45px;font-size:14px;font-weight:400;color:#111827;letter-spacing:-0.102px;">EICAR-TEST.pdf</div><div class="t" style="left:813.0px;top:742.45px;font-size:14px;font-weight:400;color:#111827;letter-spacing:-0.717px;">HSL</div><div class="t" style="left:992.0px;top:743.84px;font-size:12px;font-weight:400;color:#374151;letter-spacing:0.500px;-webkit-text-stroke:0.2px #374151;">Sonstiges</div><div class="t" style="left:1159.3px;top:742.45px;font-size:14px;font-weight:400;color:#111827;letter-spacing:0.715px;">2025</div><div class="t" style="left:1237.3px;top:740.81px;font-size:17px;font-weight:400;color:#000000;letter-spacing:-0.355px;">Nachfrage</div><div class="t" style="left:1412.0px;top:742.45px;font-size:14px;font-weight:400;color:#6b7280;letter-spacing:-0.104px;">511 Bytes</div><div class="t" style="left:1511.5px;top:742.45px;font-size:14px;font-weight:400;color:#6b7280;letter-spacing:0.026px;">10.12.2025, 14:08</div><div class="t" style="left:325.5px;top:799.55px;font-size:14px;font-weight:400;color:#111827;letter-spacing:0.312px;-webkit-text-stroke:0.4px #111827;">Steve Breunig</div><div class="t" style="left:325.5px;top:819.15px;font-size:14px;font-weight:400;color:#6b7280;letter-spacing:0.685px;">M678238</div><div class="t" style="left:455.0px;top:809.45px;font-size:14px;font-weight:400;color:#111827;letter-spacing:0.688px;">test-8mb.pdf</div><div class="t" style="left:813.0px;top:809.45px;font-size:14px;font-weight:400;color:#111827;letter-spacing:0.452px;">Sonstige - M678238</div><div class="t" style="left:992.0px;top:810.84px;font-size:12px;font-weight:400;color:#374151;letter-spacing:0.326px;-webkit-text-stroke:0.2px #374151;">Rechnungen</div><div class="t" style="left:1159.3px;top:809.45px;font-size:14px;font-weight:400;color:#111827;letter-spacing:0.715px;">2025</div><div class="t" style="left:1237.3px;top:807.81px;font-size:17px;font-weight:400;color:#000000;letter-spacing:-0.994px;">Neu</div><div class="t" style="left:1412.0px;top:809.45px;font-size:14px;font-weight:400;color:#6b7280;letter-spacing:0.071px;">8 MB</div><div class="t" style="left:1511.5px;top:809.45px;font-size:14px;font-weight:400;color:#6b7280;letter-spacing:0.207px;">06.12.2025, 22:57</div><div class="t" style="left:325.5px;top:866.55px;font-size:14px;font-weight:400;color:#111827;letter-spacing:0.222px;-webkit-text-stroke:0.4px #111827;">Steve Lysis</div><div class="t" style="left:325.5px;top:886.15px;font-size:14px;font-weight:400;color:#6b7280;letter-spacing:0.541px;">M77666</div><div class="t" style="left:455.0px;top:876.45px;font-size:14px;font-weight:400;color:#111827;letter-spacing:0.126px;">LG_Infografik_Nu_sse-Hund_Instagram_STORY_...</div><div class="t" style="left:813.0px;top:876.45px;font-size:14px;font-weight:400;color:#111827;letter-spacing:0.392px;">Sonstige - M77666</div><div class="t" style="left:992.0px;top:877.84px;font-size:12px;font-weight:400;color:#374151;letter-spacing:0.500px;-webkit-text-stroke:0.2px #374151;">Sonstiges</div><div class="t" style="left:1159.3px;top:876.45px;font-size:14px;font-weight:400;color:#111827;letter-spacing:0.615px;">2024</div><div class="t" style="left:1237.3px;top:874.81px;font-size:17px;font-weight:400;color:#000000;letter-spacing:-0.361px;">In Prüfung</div><div class="t" style="left:1412.0px;top:876.45px;font-size:14px;font-weight:400;color:#6b7280;letter-spacing:-0.174px;">165.75 KB</div><div class="t" style="left:1511.5px;top:876.45px;font-size:14px;font-weight:400;color:#6b7280;letter-spacing:0.069px;">04.12.2025, 14:31</div><div class="t" style="left:325.5px;top:933.55px;font-size:14px;font-weight:400;color:#111827;letter-spacing:0.222px;-webkit-text-stroke:0.4px #111827;">Steve Lysis</div><div class="t" style="left:325.5px;top:953.15px;font-size:14px;font-weight:400;color:#6b7280;letter-spacing:0.541px;">M77666</div><div class="t" style="left:455.0px;top:943.45px;font-size:14px;font-weight:400;color:#111827;letter-spacing:0.126px;">LG_Infografik_Nu_sse-Hund_Instagram_STORY_...</div><div class="t" style="left:813.0px;top:943.45px;font-size:14px;font-weight:400;color:#111827;letter-spacing:0.392px;">Sonstige - M77666</div><div class="t" style="left:992.0px;top:944.84px;font-size:12px;font-weight:400;color:#374151;letter-spacing:0.509px;-webkit-text-stroke:0.2px #374151;">Korrespondenz</div><div class="t" style="left:1159.3px;top:943.45px;font-size:14px;font-weight:400;color:#111827;letter-spacing:0.615px;">2024</div><div class="t" style="left:1237.3px;top:941.81px;font-size:17px;font-weight:400;color:#000000;letter-spacing:-0.355px;">Nachfrage</div><div class="t" style="left:1412.0px;top:943.45px;font-size:14px;font-weight:400;color:#6b7280;letter-spacing:-0.174px;">165.75 KB</div><div class="t" style="left:1511.5px;top:943.45px;font-size:14px;font-weight:400;color:#6b7280;letter-spacing:0.176px;">04.12.2025, 14:24</div><div class="t" style="left:325.5px;top:1000.55px;font-size:14px;font-weight:400;color:#111827;letter-spacing:0.222px;-webkit-text-stroke:0.4px #111827;">Steve Lysis</div><div class="t" style="left:325.5px;top:1020.15px;font-size:14px;font-weight:400;color:#6b7280;letter-spacing:0.541px;">M77666</div><div class="t" style="left:455.0px;top:1010.45px;font-size:14px;font-weight:400;color:#111827;letter-spacing:0.126px;">LG_Infografik_Nu_sse-Hund_Instagram_STORY_...</div><div class="t" style="left:813.0px;top:1010.45px;font-size:14px;font-weight:400;color:#111827;letter-spacing:0.392px;">Sonstige - M77666</div><div class="t" style="left:992.0px;top:1011.84px;font-size:12px;font-weight:400;color:#374151;letter-spacing:0.500px;-webkit-text-stroke:0.2px #374151;">Sonstiges</div><div class="t" style="left:1159.3px;top:1010.45px;font-size:14px;font-weight:400;color:#111827;letter-spacing:0.715px;">2025</div><div class="t" style="left:1237.3px;top:1008.81px;font-size:17px;font-weight:400;color:#000000;letter-spacing:-0.355px;">Nachfrage</div><div class="t" style="left:1412.0px;top:1010.45px;font-size:14px;font-weight:400;color:#6b7280;letter-spacing:-0.174px;">165.75 KB</div><div class="t" style="left:1511.5px;top:1010.45px;font-size:14px;font-weight:400;color:#6b7280;letter-spacing:0.069px;">04.12.2025, 14:18</div><div class="t" style="left:325.5px;top:1067.55px;font-size:14px;font-weight:400;color:#111827;letter-spacing:0.222px;-webkit-text-stroke:0.4px #111827;">Steve Lysis</div><div class="t" style="left:325.5px;top:1087.15px;font-size:14px;font-weight:400;color:#6b7280;letter-spacing:0.541px;">M77666</div><div class="t" style="left:455.0px;top:1077.45px;font-size:14px;font-weight:400;color:#111827;letter-spacing:0.000px;">Wildtierhilfe_Checkliste.pdf</div><div class="t" style="left:813.0px;top:1077.45px;font-size:14px;font-weight:400;color:#111827;letter-spacing:0.392px;">Sonstige - M77666</div><div class="t" style="left:992.0px;top:1078.84px;font-size:12px;font-weight:400;color:#374151;letter-spacing:0.000px;-webkit-text-stroke:0.2px #374151;">Antrag</div><div class="t" style="left:1159.3px;top:1077.45px;font-size:14px;font-weight:400;color:#111827;letter-spacing:0.715px;">2025</div><div class="t" style="left:1237.3px;top:1075.81px;font-size:17px;font-weight:400;color:#000000;letter-spacing:-0.355px;">Nachfrage</div><div class="t" style="left:1412.0px;top:1077.45px;font-size:14px;font-weight:400;color:#6b7280;letter-spacing:0.000px;">1.5 MB</div><div class="t" style="left:1511.5px;top:1077.45px;font-size:14px;font-weight:400;color:#6b7280;letter-spacing:0.132px;">04.12.2025, 14:05</div>
</body></html>
